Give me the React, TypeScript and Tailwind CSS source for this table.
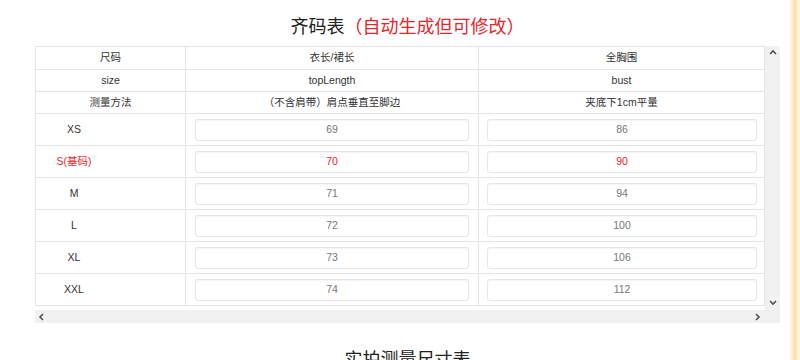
import React from "react";

const FONT = { fontFamily: '"Liberation Sans", "Noto Sans CJK SC", sans-serif' };

const rows = [
  { s: "XS", a: "69", b: "86", red: false },
  { s: "S(基码)", a: "70", b: "90", red: true },
  { s: "M", a: "71", b: "94", red: false },
  { s: "L", a: "72", b: "100", red: false },
  { s: "XL", a: "73", b: "106", red: false },
  { s: "XXL", a: "74", b: "112", red: false },
];

const headers = [
  ["尺码", "衣长/裙长", "全胸围"],
  ["size", "topLength", "bust"],
  ["测量方法", "（不含肩带）肩点垂直至脚边", "夹底下1cm平量"],
];

function Chevron({ dir }: { dir: "up" | "down" | "left" | "right" }) {
  const d =
    dir === "up"
      ? "M1 5 L4 2 L7 5"
      : dir === "down"
      ? "M1 2 L4 5 L7 2"
      : dir === "left"
      ? "M5 1 L2 4 L5 7"
      : "M2 1 L5 4 L2 7";
  return (
    <svg width="8" height="8" viewBox="0 0 8 8">
      <path d={d} fill="none" stroke="#505050" strokeWidth="1.6" />
    </svg>
  );
}

function ValueInput({ v, red }: { v: string; red: boolean }) {
  return (
    <div
      className={`h-[22px] w-full rounded-[3px] border border-[#e6e6e6] shadow-[inset_0_1px_1px_rgba(0,0,0,0.04)] flex items-center justify-center text-[10.5px] ${
        red ? "text-[#e4262b]" : "text-[#777]"
      }`}
    >
      {v}
    </div>
  );
}

export default function App() {
  return (
    <div className="w-[800px] h-[360px] overflow-hidden bg-white flex" style={FONT}>
      <div className="w-[790px] shrink-0">
        <div className="ml-[35px] w-[745px]">
          <div className="pt-[15px] h-[46px] text-center text-[18px] leading-[24px]">
            <span className="text-[#222]">齐码表</span>
            <span className="text-[#e4262b]">（自动生成但可修改）</span>
          </div>
          <div className="h-[277px] flex flex-col">
            <div className="flex h-[264px]">
              <div className="w-[730px] h-[264px] overflow-hidden">
                <div className="border border-[#e4e4e4] text-[10.5px] text-[#333]">
                  {headers.map((h, i) => (
                    <div
                      key={i}
                      className={`flex h-[22px] ${i > 0 ? "border-t border-[#e4e4e4]" : ""}`}
                    >
                      <div className="w-[150px] flex items-center justify-center border-r border-[#e4e4e4]">
                        {h[0]}
                      </div>
                      <div className="w-[293px] flex items-center justify-center border-r border-[#e4e4e4]">
                        {h[1]}
                      </div>
                      <div className="flex-1 flex items-center justify-center">{h[2]}</div>
                    </div>
                  ))}
                  {rows.map((r) => (
                    <div key={r.s} className="flex h-[32px] border-t border-[#e4e4e4]">
                      <div className="w-[150px] flex items-center border-r border-[#e4e4e4]">
                        <div
                          className={`w-[76px] text-center ${r.red ? "text-[#e4262b]" : "text-[#333]"}`}
                        >
                          {r.s}
                        </div>
                      </div>
                      <div className="w-[293px] flex items-center px-[9px] border-r border-[#e4e4e4]">
                        <ValueInput v={r.a} red={r.red} />
                      </div>
                      <div className="flex-1 flex items-center pl-[8px] pr-[7px]">
                        <ValueInput v={r.b} red={r.red} />
                      </div>
                    </div>
                  ))}
                </div>
              </div>
              <div className="w-[15px] bg-[#f1f1f1] flex flex-col items-center justify-between py-[3px]">
                <Chevron dir="up" />
                <Chevron dir="down" />
              </div>
            </div>
            <div className="h-[13px] bg-[#f1f1f1] flex items-center">
              <div className="w-[730px] flex items-center justify-between px-[3px]">
                <Chevron dir="left" />
                <Chevron dir="right" />
              </div>
            </div>
          </div>
          <div className="mt-[25px] text-center text-[18px] leading-[24px] text-[#222]">
            实拍测量尺寸表
          </div>
        </div>
      </div>
      <div className="w-[10px] h-full bg-[linear-gradient(to_right,#fffaf0_0%,#fde6b8_35%,#fcd9a0_50%,#fff1d2_75%,#fff8e8_100%)]" />
    </div>
  );
}
